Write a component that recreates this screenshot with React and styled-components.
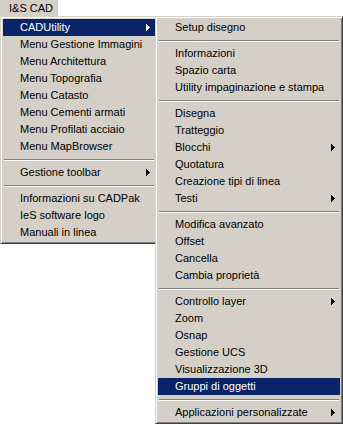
import React from "react";
import styled, { createGlobalStyle } from "styled-components";

const Global = createGlobalStyle`
  html, body { margin: 0; padding: 0; background: #ffffff; }
  body {
    font-family: "Liberation Sans", Arial, sans-serif;
    font-size: 11px;
    color: #000;
  }
`;

const Screen = styled.div`
  display: flex;
  flex-direction: column;
  align-items: flex-start;
  width: 343px;
  height: 425px;
  overflow: hidden;
`;

const MenuBar = styled.div`
  display: flex;
  height: 16px;
`;

const BarItem = styled.div`
  background: #d4d0c8;
  padding: 0 5px 0 9px;
  line-height: 16px;
  white-space: nowrap;
`;

const Menus = styled.div`
  display: flex;
  align-items: flex-start;
`;

const Menu = styled.div`
  box-sizing: border-box;
  width: ${(p) => p.$width}px;
  margin-left: ${(p) => p.$overlap || 0}px;
  background: #d4d0c8;
  border: 1px solid;
  border-color: #d4d0c8 #404040 #404040 #d4d0c8;
  box-shadow: inset 1px 1px 0 #ffffff, inset -1px -1px 0 #808080;
  padding: 2px;
  display: flex;
  flex-direction: column;
`;

const Item = styled.div`
  height: 17px;
  display: flex;
  align-items: center;
  justify-content: space-between;
  padding: 0 5px 0 17px;
  white-space: nowrap;
  background: ${(p) => (p.$active ? "#0a246a" : "transparent")};
  color: ${(p) => (p.$active ? "#ffffff" : "#000000")};
`;

const Label = styled.span`
  line-height: 17px;
`;

const Separator = styled.div`
  height: 9px;
  box-sizing: border-box;
  padding-top: 4px;
  margin: 0 1px;
  &::before {
    content: "";
    display: block;
    height: 1px;
    background: #808080;
    border-bottom: 1px solid #ffffff;
  }
`;

const Arrow = ({ color }) => (
  <svg width="4" height="7" viewBox="0 0 4 7" shapeRendering="crispEdges" style={{ display: "block" }}>
    <rect x="0" y="0" width="1" height="7" fill={color} />
    <rect x="1" y="1" width="1" height="5" fill={color} />
    <rect x="2" y="2" width="1" height="3" fill={color} />
    <rect x="3" y="3" width="1" height="1" fill={color} />
  </svg>
);

const mainMenu = [
  { label: "CADUtility", sub: true, active: true },
  { label: "Menu Gestione Immagini" },
  { label: "Menu Architettura" },
  { label: "Menu Topografia" },
  { label: "Menu Catasto" },
  { label: "Menu Cementi armati" },
  { label: "Menu Profilati acciaio" },
  { label: "Menu MapBrowser" },
  { sep: true },
  { label: "Gestione toolbar", sub: true },
  { sep: true },
  { label: "Informazioni su CADPak" },
  { label: "IeS software logo" },
  { label: "Manuali in linea" },
];

const subMenu = [
  { label: "Setup disegno" },
  { sep: true },
  { label: "Informazioni" },
  { label: "Spazio carta" },
  { label: "Utility impaginazione e stampa" },
  { sep: true },
  { label: "Disegna" },
  { label: "Tratteggio" },
  { label: "Blocchi", sub: true },
  { label: "Quotatura" },
  { label: "Creazione tipi di linea" },
  { label: "Testi", sub: true },
  { sep: true },
  { label: "Modifica avanzato" },
  { label: "Offset" },
  { label: "Cancella" },
  { label: "Cambia proprietà" },
  { sep: true },
  { label: "Controllo layer", sub: true },
  { label: "Zoom" },
  { label: "Osnap" },
  { label: "Gestione UCS" },
  { label: "Visualizzazione 3D" },
  { label: "Gruppi di oggetti", active: true },
  { sep: true },
  { label: "Applicazioni personalizzate", sub: true },
];

const renderItems = (items) =>
  items.map((it, i) =>
    it.sep ? (
      <Separator key={i} />
    ) : (
      <Item key={i} $active={it.active}>
        <Label>{it.label}</Label>
        {it.sub && <Arrow color={it.active ? "#ffffff" : "#000000"} />}
      </Item>
    )
  );

export default function App() {
  return (
    <Screen>
      <Global />
      <MenuBar>
        <BarItem>I&amp;S CAD</BarItem>
      </MenuBar>
      <Menus>
        <Menu $width={158}>{renderItems(mainMenu)}</Menu>
        <Menu $width={188} $overlap={-3}>{renderItems(subMenu)}</Menu>
      </Menus>
    </Screen>
  );
}
